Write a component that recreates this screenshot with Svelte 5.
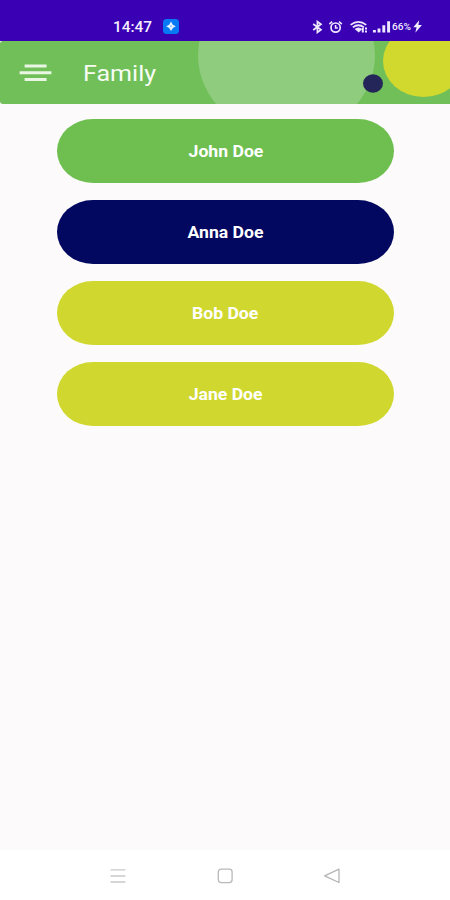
<script>
  const members = [
    { name: 'John Doe', tone: 'green' },
    { name: 'Anna Doe', tone: 'navy' },
    { name: 'Bob Doe', tone: 'lime' },
    { name: 'Jane Doe', tone: 'lime' }
  ];
</script>

<div class="screen">
  <div class="status-bar">
    <span class="time">14:47</span>
    <svg class="app-badge" width="16" height="15" viewBox="0 0 16 15">
      <rect width="16" height="15" rx="3.5" fill="#0879f5" />
      <path d="M8 2.6 L9.8 5.8 L12.8 7.3 L9.8 8.9 L8 12 L6.2 8.9 L3.2 7.3 L6.2 5.8Z" fill="#e8f3ff" />
      <circle cx="8" cy="7.3" r="1" fill="#8cc2fb" />
    </svg>
    <svg class="indicators" width="80" height="14" viewBox="0 0 80 14" fill="none" stroke="#eee8ff">
      <!-- bluetooth -->
      <path d="M1.2 4 L9 9.7 L5.4 12.4 V1.6 L9 4.3 L1.2 10" stroke-width="1.7" />
      <!-- alarm -->
      <circle cx="23.6" cy="7.6" r="4.6" stroke-width="1.7" />
      <path d="M23.6 5 V8 H25.8 M17.4 4.1 L20.2 1.6 M29.8 4.1 L27 1.6" stroke-width="1.6" />
      <!-- wifi -->
      <path d="M38.6 4.9 Q46.4 -1.2 54.2 4.9 M40.8 7.4 Q46.4 3 52 7.4" stroke-width="1.8" />
      <path d="M42.6 9 Q46.4 6 50.2 9 L46.8 12.6Z" fill="#eee8ff" stroke="none" />
      <path d="M50.8 8 V12.4 M54 7.6 V9.6 M54 10.6 V12.6" stroke-width="2" />
      <!-- signal -->
      <path d="M62.4 10 V12.5 M67 8.4 V12.5 M71.8 5.3 V12.5 M76.6 1.2 V12.5" stroke-width="2.9" />
    </svg>
    <span class="battery">66%</span>
    <svg class="bolt" width="9" height="13" viewBox="0 0 9 13">
      <path d="M6.2 0.3 L0.3 7.3 H3.6 L2.3 12.8 L8.9 5 H5.4Z" fill="#f4efff" />
    </svg>
  </div>

  <header class="app-bar">
    <svg class="bubbles" width="450" height="63" viewBox="0 0 450 63">
      <ellipse cx="286.5" cy="14.5" rx="88.5" ry="80" fill="#8fcc7e" />
      <ellipse cx="423.5" cy="20" rx="40.5" ry="36" fill="#d1d92f" />
      <ellipse cx="373" cy="42.5" rx="10" ry="9.2" fill="#24265a" />
    </svg>
    <button class="menu" aria-label="Menu">
      <svg width="34" height="20" viewBox="0 0 34 20" stroke="#e9f6e4" stroke-width="3">
        <path d="M5.6 3 H27.6 M0.6 9.7 H32.4 M5.6 16.6 H27.6" />
      </svg>
    </button>
    <h1>Family</h1>
  </header>

  <main>
    {#each members as member}
      <button class="member {member.tone}"><span>{member.name}</span></button>
    {/each}
  </main>

  <nav>
    <svg width="16" height="16" viewBox="0 0 16 16" stroke="#c9c9c9" stroke-width="1.3">
      <path d="M0.5 1.8 H15.5 M0.5 8 H15.5 M0.5 14 H15.5" />
    </svg>
    <svg width="16" height="16" viewBox="0 0 16 16" fill="none" stroke="#b9b9b9" stroke-width="1.3">
      <rect x="1.3" y="1.2" width="13.8" height="13.4" rx="2.8" />
    </svg>
    <svg width="16" height="16" viewBox="0 0 16 16" fill="none" stroke="#b5b5b5" stroke-width="1.3" stroke-linejoin="round">
      <path d="M15 1.2 V14.5 L0.6 7.9Z" />
    </svg>
  </nav>
</div>

<style>
  :global(body) {
    background: #fff;
  }

  .screen {
    width: 450px;
    height: 900px;
    display: flex;
    flex-direction: column;
    background: #fcfafb;
    font-family: Roboto, "Liberation Sans", sans-serif;
    overflow: hidden;
  }

  .status-bar {
    height: 41px;
    flex-shrink: 0;
    display: flex;
    align-items: center;
    box-sizing: border-box;
    padding: 12px 28px 0 113px;
    background: #3a00b3;
    color: #f4efff;
  }

  .time {
    width: 49.5px;
    font-size: 14px;
    font-weight: 500;
    line-height: 16px;
    white-space: nowrap;
    transform: scaleX(1.1);
    transform-origin: left;
  }

  .indicators {
    margin-left: auto;
  }

  .battery {
    width: 21px;
    font-size: 9px;
    font-weight: 500;
    line-height: 14px;
    white-space: nowrap;
    transform: scaleX(1.12);
    transform-origin: left;
  }

  .app-bar {
    position: relative;
    height: 63px;
    flex-shrink: 0;
    display: flex;
    align-items: center;
    background: #70bf59;
    border-radius: 3px 0 0 3px;
    overflow: hidden;
  }

  .bubbles {
    position: absolute;
    inset: 0;
  }

  .menu {
    position: relative;
    display: flex;
    margin: 0 0 0 19px;
    padding: 0;
    width: 64px;
    border: none;
    background: none;
    cursor: pointer;
  }

  h1 {
    position: relative;
    margin: 2px 0 0;
    font-size: 22px;
    font-weight: 400;
    line-height: 28px;
    color: #f7fcf4;
    transform: scaleX(1.14);
    transform-origin: left;
  }

  main {
    flex: 1;
    display: flex;
    flex-direction: column;
    align-items: center;
    gap: 17px;
    padding: 14.6px 0 0 1px;
  }

  .member {
    width: 337.6px;
    height: 64px;
    padding: 2px 0 0;
    border: none;
    border-radius: 36px / 32px;
    color: #fff;
    font: bold 16px/20px Roboto, "Liberation Sans", sans-serif;
    cursor: pointer;
  }

  .member span {
    display: inline-block;
    transform: scaleX(1.1);
  }

  .green { background: #6ebf4f; }
  .navy { background: #02085f; }
  .lime { background: #d0d82f; }

  nav {
    height: 50px;
    flex-shrink: 0;
    display: flex;
    justify-content: center;
    gap: 91px;
    padding-top: 18px;
    box-sizing: border-box;
    background: #fff;
  }
</style>
